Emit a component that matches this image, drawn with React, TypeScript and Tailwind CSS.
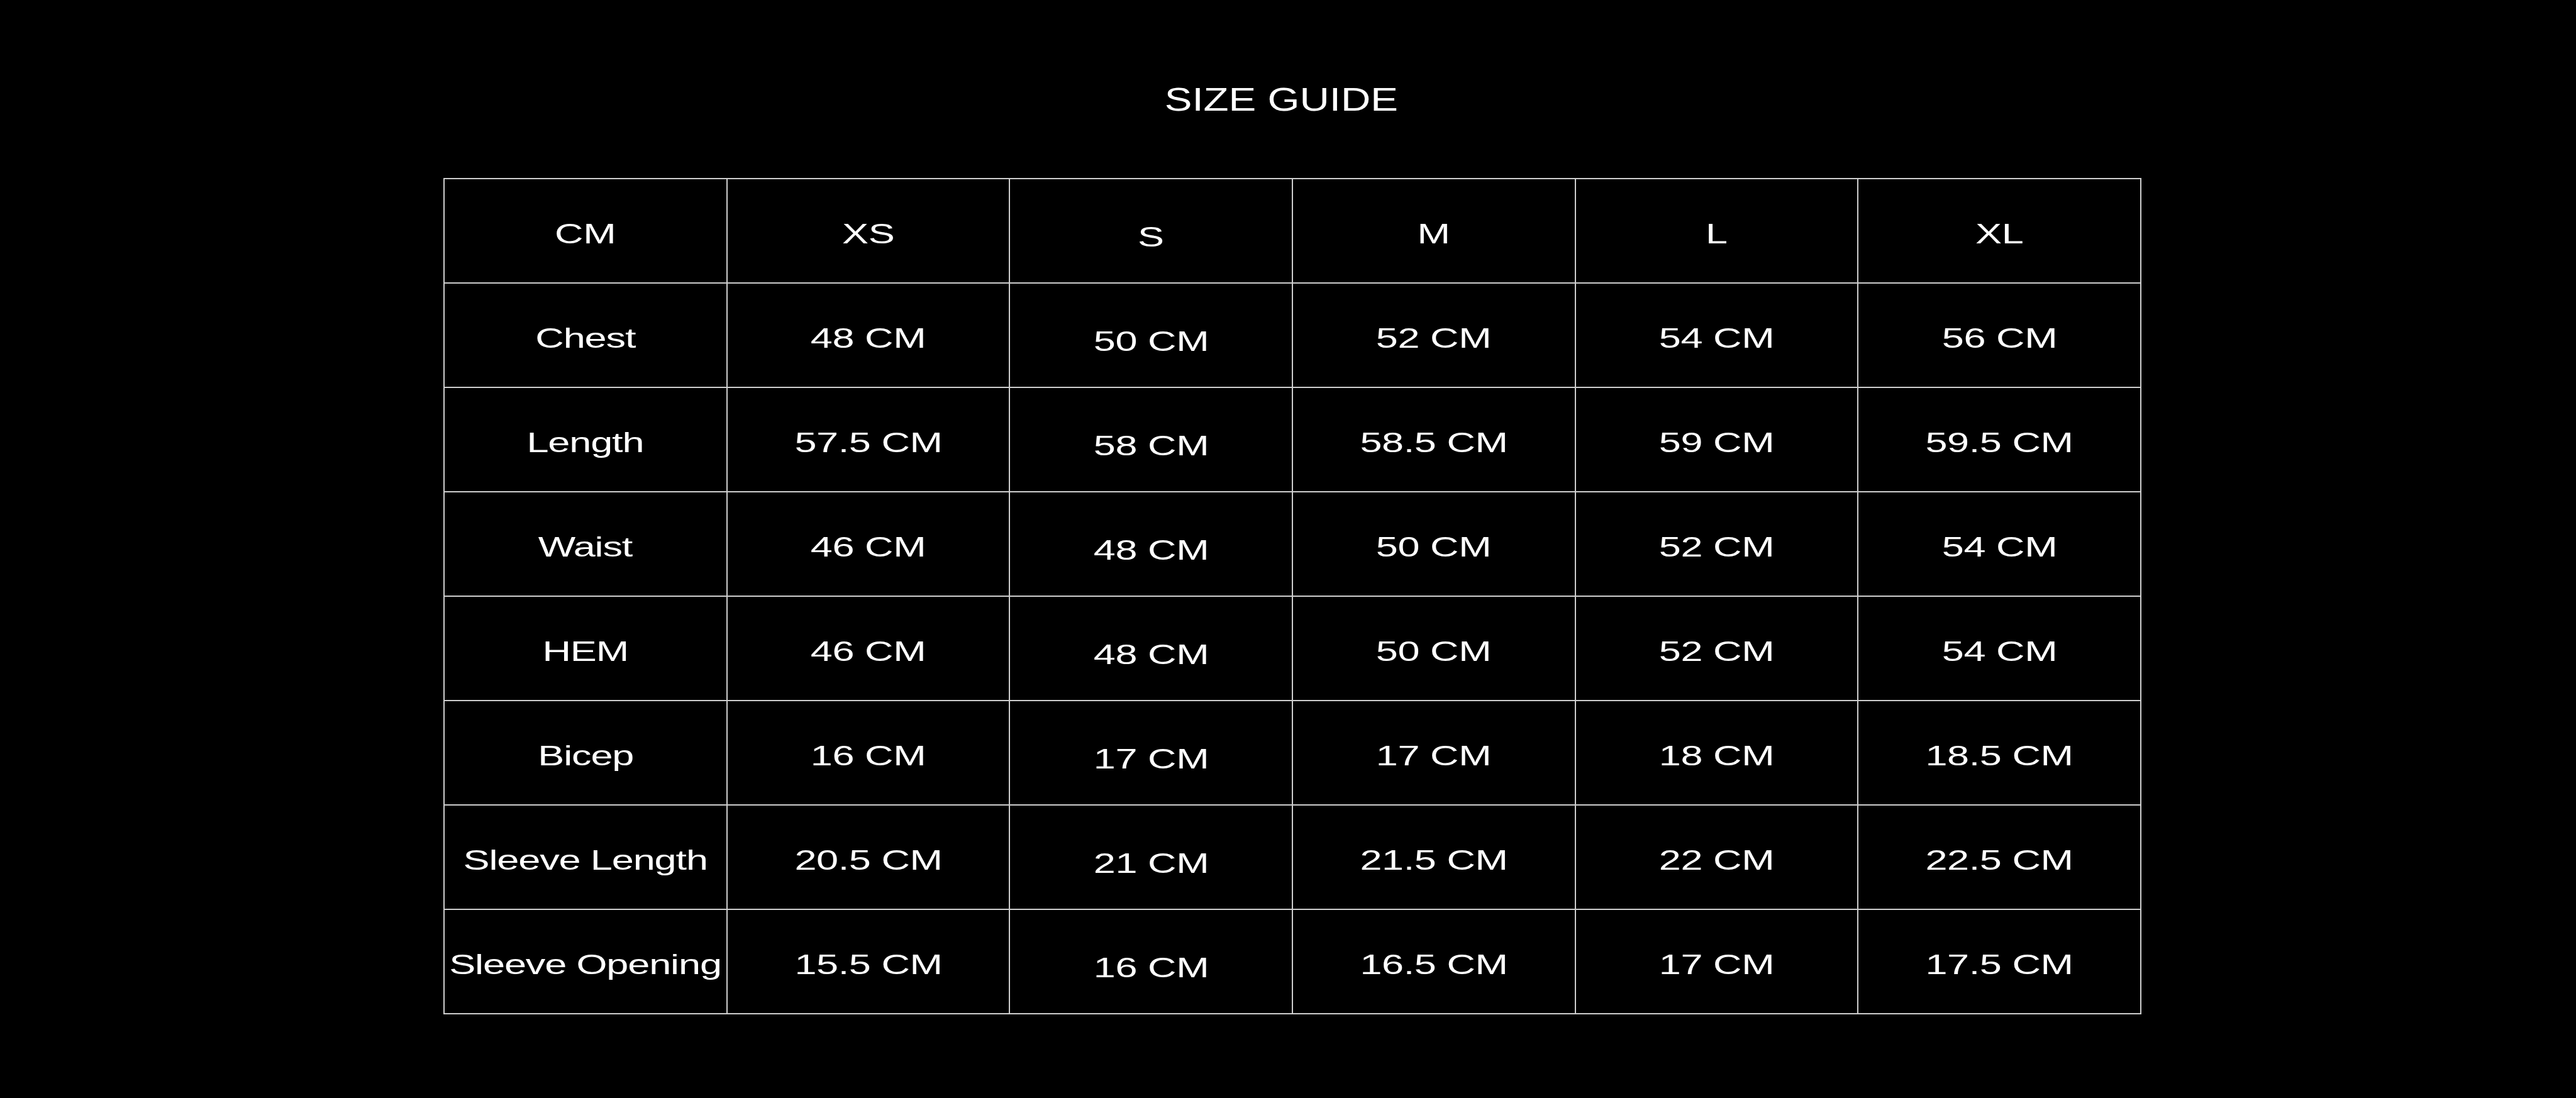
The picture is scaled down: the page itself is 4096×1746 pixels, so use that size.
import React from "react";

const header = ["CM", "XS", "S", "M", "L", "XL"];
const rows: string[][] = [
  ["Chest", "48 CM", "50 CM", "52 CM", "54 CM", "56 CM"],
  ["Length", "57.5 CM", "58 CM", "58.5 CM", "59 CM", "59.5 CM"],
  ["Waist", "46 CM", "48 CM", "50 CM", "52 CM", "54 CM"],
  ["HEM", "46 CM", "48 CM", "50 CM", "52 CM", "54 CM"],
  ["Bicep", "16 CM", "17 CM", "17 CM", "18 CM", "18.5 CM"],
  ["Sleeve Length", "20.5 CM", "21 CM", "21.5 CM", "22 CM", "22.5 CM"],
  ["Sleeve Opening", "15.5 CM", "16 CM", "16.5 CM", "17 CM", "17.5 CM"],
];

function Cell({ text, col, row }: { text: string; col: number; row: number }) {
  const label = col === 0 && row > 0;
  return (
    <div
      className={
        "flex h-[166px] items-center justify-center border-r-2 border-b-2 border-[#cfcfcf] " +
        (col === 2 ? "pt-[18px]" : "pt-[8px]")
      }
    >
      <span
        className={
          "block whitespace-nowrap text-[45px] leading-none text-white scale-x-[1.4] " +
          (label ? "tracking-[-0.8px]" : "tracking-[-0.3px]")
        }
      >
        {text}
      </span>
    </div>
  );
}

export default function App() {
  const all = [header, ...rows];
  return (
    <div
      className="min-h-[1746px] w-full bg-black"
      style={{ fontFamily: '"Liberation Sans", Arial, sans-serif' }}
    >
      <div className="flex justify-center pt-[132px] pr-[22px]">
        <h1 className="block whitespace-nowrap text-[52px] font-normal leading-none text-white scale-x-[1.26]">
          SIZE GUIDE
        </h1>
      </div>
      <div className="flex justify-center pt-[99px] pl-[14px]">
        <div className="grid w-[2700px] grid-cols-6 border-t-2 border-l-2 border-[#cfcfcf]">
          {all.map((r, ri) =>
            r.map((t, ci) => <Cell key={ri + "-" + ci} text={t} col={ci} row={ri} />)
          )}
        </div>
      </div>
    </div>
  );
}
